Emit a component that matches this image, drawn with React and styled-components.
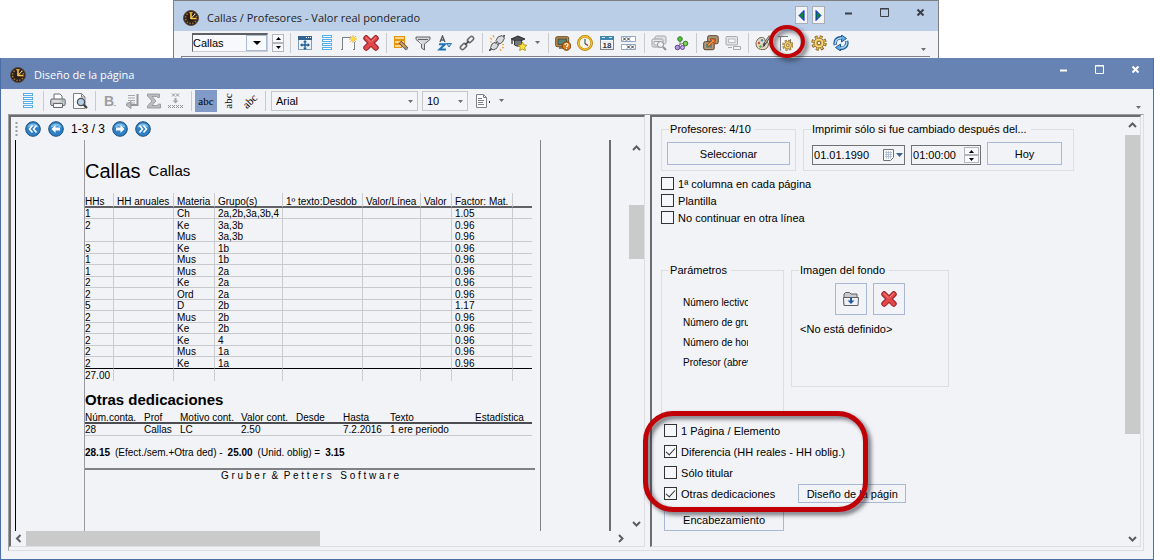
import React from 'react'
import styled, { createGlobalStyle, css } from 'styled-components'

const GlobalStyle = createGlobalStyle`
  * {
    box-sizing: border-box;
  }

  body {
    margin: 0;
    background: #fff;
    color: #000;
    font-family: 'Liberation Sans', Arial, sans-serif;
    font-size: 11px;
  }

  button,
  input,
  select {
    font: inherit;
    color: inherit;
  }
`

/* ---------- windows ---------- */

const Desktop = styled.div`
  display: flex;
  flex-direction: column;
  min-height: 100vh;
`

const BackWindow = styled.section`
  margin: 0 215px 0 173px;
  border: 1px solid #7f7f7f;
  border-bottom: 0;
  background: #f2f3f7;
`

const Dialog = styled.section`
  flex: 1;
  display: flex;
  flex-direction: column;
  border: 1px solid #4c6ea6;
  border-top: 0;
  background: #f2f3f7;
`

const TitleBar = styled.header`
  display: flex;
  align-items: flex-start;
  height: ${props => (props.$active ? 31 : 30)}px;
  padding: 0 8px 0 9px;
  background: ${props => (props.$active ? '#6683b3' : '#bacee8')};
  color: ${props => (props.$active ? '#fff' : '#1e1e1e')};
`

const WindowTitle = styled.h1`
  flex: 1;
  display: flex;
  align-items: center;
  gap: 8px;
  margin: 0;
  padding-top: 9px;
  font: 11px/16px 'Open Sans', 'Noto Sans', sans-serif;
`

const WindowButtons = styled.div`
  display: flex;
`

const WindowButton = styled.button`
  display: flex;
  align-items: center;
  justify-content: center;
  width: 36px;
  height: 23px;
  padding: 0;
  border: 0;
  background: none;

  &:last-child {
    margin-right: -8px;
  }
`

const StepButtons = styled.div`
  display: flex;
  gap: 4px;
  padding: 5px 5px 0 0;
`

const StepButton = styled.button`
  display: flex;
  align-items: center;
  justify-content: center;
  width: 13px;
  height: 18px;
  padding: 0;
  border: 1px solid #a9adb5;
  background: #f2f3f7;
`

/* ---------- toolbars ---------- */

const Toolbar = styled.div`
  display: flex;
  align-items: center;
  height: 25px;
  padding: 0 12px 2px ${props => props.$indent}px;
`

const ToolButton = styled.button`
  position: relative;
  display: flex;
  align-items: center;
  justify-content: center;
  width: ${props => (props.$narrow ? 14 : 22)}px;
  height: 22px;
  padding: 0;
  border: 0;
  background: ${props => (props.$pressed ? '#809bc8' : 'none')};
`

const Separator = styled.span`
  width: 1px;
  height: 20px;
  margin: 0 ${props => props.$after || 3}px 0 4px;
  background: #c9cacd;
`

const Overflow = styled.button`
  margin-left: auto;
  align-self: flex-end;
  height: 11px;
  padding: 0;
  border: 0;
  background: none;
  line-height: 0;
`

const Lettering = styled.span`
  font: 11px/12px 'Liberation Serif', serif;
  transform: rotate(${props => props.$angle || 0}deg);
`

const ContentEdge = styled.div`
  height: 2px;
  margin: 0 8px 0 7px;
  border-top: 1px solid #7f8186;
  border-left: 1px solid #7f8186;
`

const SelectBox = styled.span`
  position: relative;
  display: flex;
  width: ${props => props.$width}px;
  height: 20px;
  margin-right: 4px;

  select {
    flex: 1;
    padding: 0 16px 0 4px;
    border: 1px solid #c4c6ca;
    border-radius: 0;
    background: #f4f5f9;
    appearance: none;
  }

  svg {
    position: absolute;
    right: 5px;
    top: 9px;
    pointer-events: none;
  }
`

const SunkenSelect = styled(SelectBox)`
  height: 19px;

  select {
    padding-left: 0;
    border-color: #5e6066 #c9ccd2 #c9ccd2 #5e6066;
    border-width: 2px 1px 1px 1px;
    background: #f8f9fc;
  }
`

const DropMark = styled.span`
  position: absolute;
  right: 1px;
  top: 2px;
  display: flex;
  align-items: center;
  justify-content: center;
  width: 21px;
  height: 16px;
  border: 1px solid #a9bad3;
  background: #f8f9fc;
  pointer-events: none;

  svg {
    position: static;
  }
`

const SpinBox = styled.span`
  display: flex;
  flex-direction: column;
  width: ${props => props.$width}px;
  height: ${props => props.$height}px;
  margin-right: ${props => props.$gap || 0}px;

  button {
    flex: 1;
    display: flex;
    align-items: center;
    justify-content: center;
    padding: 0;
    border: 1px solid #b4b6ba;
    background: #f8f9fc;
  }
`

/* ---------- dialog body ---------- */

const Frame = styled.div`
  flex: 1;
  display: flex;
  gap: 5px;
  margin: 0 9px 8px 7px;
  padding: 0 2px 3px 0;
  border: 1px solid;
  border-color: #9b9da1 #dcdee2 #dcdee2 #9b9da1;
`

const pane = css`
  border-style: solid;
  border-color: #6b6d71 #dcdee2 #dcdee2 #6b6d71;
  border-width: 2px 1px 1px 2px;
`

const PreviewPane = styled.div`
  ${pane}
  flex: 637;
  min-width: 0;
  display: flex;
  flex-direction: column;
`

const SettingsPane = styled.div`
  ${pane}
  flex: 491;
  min-width: 0;
  display: flex;
`

const PageNav = styled.nav`
  display: flex;
  align-items: center;
  gap: 7px;
  height: 23px;
  padding: 1px 0 0 4px;
  font-size: 12px;

  button {
    padding: 0;
    border: 0;
    background: none;
    line-height: 0;
  }
`

const PreviewArea = styled.div`
  flex: 1;
  display: flex;
`

const Paper = styled.div`
  flex: 1;
  display: flex;
  margin: 0 18px 0 4px;
  padding: 0 68px;
  border-left: 1px solid #000;
  border-right: 2px solid #6b6d71;
`

const PrintArea = styled.article`
  flex: 1;
  min-width: 0;
  padding-right: 5px;
  border-left: 1px solid #9a9b9e;
  border-right: 1px solid #808286;
  font-size: 10px;
  line-height: 10px;
`

const PageHeading = styled.h2`
  display: flex;
  align-items: center;
  gap: 8px;
  margin: 0;
  padding: 19px 0 10px;
  font-size: 20px;
  font-weight: normal;
  line-height: 24px;

  small {
    font-size: 15px;
  }
`

const LessonTable = styled.table`
  border-collapse: separate;
  border-spacing: 0;
  table-layout: fixed;
  width: 447px;
  white-space: nowrap;

  th,
  td {
    height: 12px;
    padding: 0 0 0 3px;
    border-right: 1px solid #cbccd0;
    font-weight: normal;
    text-align: left;
    vertical-align: bottom;
  }

  th:first-child,
  td:first-child {
    padding-left: 0;
  }

  th:last-child,
  td:last-child {
    border-right: 0;
  }

  th {
    height: 15px;
    border-bottom: 2px solid #606266;
    line-height: 8px;
  }

  tbody td {
    border-bottom: 1px solid #c8c9cd;
    line-height: 8px;
  }

  tbody tr:nth-child(odd) td {
    height: 11px;
  }

  tbody tr:nth-child(2) td {
    padding-bottom: 1px;
    border-bottom: 0;
  }

  tbody tr:last-child td {
    border-bottom-color: #000;
  }
`

const SectionHeading = styled.h3`
  margin: 0;
  padding-top: 11px;
  font-size: 15px;
  line-height: 16px;
`

const ExtraTable = styled.table`
  border-collapse: separate;
  border-spacing: 0;
  table-layout: fixed;
  width: 447px;
  white-space: nowrap;

  th,
  td {
    height: 12px;
    padding: 0;
    border-bottom: 1px solid #c8c9cd;
    font-weight: normal;
    text-align: left;
  }

  th {
    height: 16px;
    border-bottom: 2px solid #4b4d50;
    line-height: 8px;
    vertical-align: bottom;
  }
`

const Summary = styled.p`
  display: flex;
  gap: 5px;
  margin: 0;
  padding: 12px 0 10px;
`

const PageFooter = styled.footer`
  border-top: 2px solid #808184;
  padding-top: 1px;
  text-align: center;
  white-space: pre;
`

const ScrollBar = styled.div`
  flex: none;
  display: flex;
  flex-direction: ${props => (props.$horizontal ? 'row' : 'column')};
  ${props => (props.$horizontal ? 'height' : 'width')}: 15px;
  padding-${props => (props.$horizontal ? 'right' : 'bottom')}: ${props => props.$end || 0}px;

  button {
    flex: none;
    display: flex;
    align-items: center;
    justify-content: center;
    width: 15px;
    height: 15px;
    padding: 0;
    border: 0;
    background: none;
  }
`

const Track = styled.div`
  flex: 1;
  display: flex;
  flex-direction: inherit;
`

const Thumb = styled.div`
  flex: 0 0 ${props => props.$length}%;
  margin-${props => (props.$horizontal ? 'left' : 'top')}: ${props => props.$start}px;
  background: #cacaca;
`

/* ---------- settings ---------- */

const Settings = styled.form`
  flex: 1;
  min-width: 0;
  padding: 5px 9px 0;
`

const GroupRow = styled.div`
  display: flex;
  align-items: flex-start;
  gap: 7px;
`

const Group = styled.fieldset`
  width: ${props => props.$width}px;
  height: ${props => props.$height}px;
  min-width: 0;
  margin: 0;
  padding: 0 ${props => props.$pad}px;
  border: 1px solid #dcdee2;

  legend {
    margin-left: ${props => 7 - props.$pad}px;
    padding: 0 4px 0 1px;
    line-height: 14px;
  }
`

const FieldRow = styled.div`
  display: flex;
  align-items: flex-end;
  gap: 6px;
  padding-top: 6px;
`

const PushButton = styled.button`
  width: ${props => props.$width}px;
  height: ${props => props.$height || 23}px;
  padding: 0;
  border: 1px solid #a9b9d4;
  background: #f2f3f7;
  line-height: 10px;
  white-space: nowrap;
  overflow: hidden;
`

const IconButton = styled(PushButton)`
  display: flex;
  align-items: center;
  justify-content: center;
`

const Field = styled.label`
  display: flex;
  align-items: center;
  width: ${props => props.$width}px;
  height: 20px;
  padding: 1px;
  border: 1px solid #6f7175;

  input {
    flex: 1;
    min-width: 0;
    padding: 0;
    border: 0;
    background: none;
    outline: none;
  }

  > button {
    padding: 0;
    border: 0;
    background: none;
    line-height: 0;
  }
`

const CheckLabel = styled.label`
  display: flex;
  align-items: center;
  gap: 4px;
  height: ${props => props.$height}px;
  white-space: nowrap;

  input {
    display: flex;
    align-items: center;
    justify-content: center;
    width: 13px;
    height: 13px;
    margin: 0;
    border: 1px solid #333;
    background: #f6f7fa;
    appearance: none;
  }

  input:checked::after {
    content: '';
    width: 4px;
    height: 8px;
    margin-top: -2px;
    border: solid #333;
    border-width: 0 1px 1px 0;
    transform: rotate(42deg);
  }
`

const CheckList = styled.div`
  padding: 4px 0 37px;
`

const ParameterList = styled.ul`
  width: 65px;
  margin: 16px 0 0 21px;
  padding: 0;
  overflow: hidden;
  list-style: none;
  font-size: 10px;
  line-height: 20px;
  white-space: nowrap;
`

const BackgroundButtons = styled.div`
  display: flex;
  justify-content: center;
  gap: 6px;
  padding: 6px 1px 8px 0;
`

const Highlighted = styled.div`
  position: relative;
  padding: 7px 3px 0;
`

const Options = styled.div`
  display: flex;
  flex-direction: column;
  padding-bottom: 4px;
`

const OptionRow = styled.div`
  display: flex;
  align-items: center;
  gap: 23px;
`

const ring = css`
  position: absolute;
  border-style: solid;
  border-color: #c00207;
  filter: drop-shadow(3px 3px 2px rgba(40, 40, 50, 0.65));
  pointer-events: none;
`

const OptionsRing = styled.span`
  ${ring}
  left: -18px;
  top: -2px;
  width: 225px;
  height: 101px;
  border-width: 5px;
  border-radius: 30px;
`

const ButtonRing = styled.span`
  ${ring}
  left: -5px;
  top: -7px;
  width: 36px;
  height: 33px;
  border-width: 4px;
  border-radius: 50%;
`

/* ---------- icons ---------- */

const Icon = ({ children, size = 16 }) => (
  <svg width={size} height={size} viewBox="0 0 16 16" fill="none" aria-hidden="true">
    {children}
  </svg>
)

const Arrow = ({ dir = 'down', w = 5, fill = '#6b6d71' }) => {
  const h = Math.ceil(w / 2)
  return (
    <svg width={w} height={h} viewBox={`0 0 ${w} ${h}`} aria-hidden="true">
      <path d={dir === 'down' ? `M0 0H${w}L${w / 2} ${h}Z` : `M0 ${h}H${w}L${w / 2} 0Z`} fill={fill} />
    </svg>
  )
}

const chevrons = {
  up: 'M1 7l3.5-3.5L8 7',
  down: 'M1 3l3.5 3.5L8 3',
  left: 'M6.5 1L3 4.5 6.5 8',
  right: 'M3 1l3.5 3.5L3 8',
}

const Chevron = ({ dir }) => (
  <svg width="9" height="9" viewBox="0 0 9 9" aria-hidden="true">
    <path d={chevrons[dir]} fill="none" stroke="#5c5e62" strokeWidth="2" />
  </svg>
)

const AppIcon = () => (
  <Icon>
    <circle cx="8" cy="8" r="7.5" fill="#2b2019" stroke="#544a44" />
    <circle cx="8" cy="8" r="5.5" stroke="#a9773c" strokeWidth="1.5" strokeDasharray="1.4 1.48" />
    <path d="M8 2v7M8 8.5h5" stroke="#ffc23c" strokeWidth="1.6" />
    <path d="M8 8.5L12 4" stroke="#f6e2b0" />
  </Icon>
)

const TableMoveIcon = () => (
  <Icon>
    <rect x="1.5" y="1.5" width="13" height="13" fill="#eef3fa" stroke="#7f9cb8" />
    <path d="M1 1h14v4H1z" fill="#33628e" />
    <path d="M9 2.500h1M11 2.500h1M13 2.500h1" stroke="#fff" />
    <path d="M8 6v8M4 10h8" stroke="#1d5b91" strokeWidth="1.3" />
    <path d="M8 5l2 2.300H6zM8 15l2-2.300H6zM3 10l2.300-2v4zM13 10l-2.300-2v4z" fill="#1d5b91" />
  </Icon>
)

const RowsIcon = () => (
  <Icon>
    {[0.5, 4.5, 8.5, 12.5].map(y => (
      <rect key={y} x="3.5" y={y} width="9" height="2" fill="#fff" stroke="#56aee8" />
    ))}
  </Icon>
)

const NewPageIcon = () => (
  <Icon>
    <path d="M2 3h8l3 4v8H2z" fill="#f7f8fb" />
    <path d="M1 2.500h8.500M1.500 2.500V15M13.500 7v8M0 14.500h2M12 14.500h2" stroke="#7e8084" />
    <path d="M12 0v8M8 4h8M9 1l6 6M15 1L9 7" stroke="#e9a93c" />
    <circle cx="12" cy="4" r="2" fill="#ffdf2e" />
  </Icon>
)

const CrossIcon = () => (
  <Icon>
    <path d="M3.200 3.200l9.600 9.600M12.800 3.200L3.200 12.800" stroke="#8e1b20" strokeWidth="5.8" strokeLinecap="round" />
    <path d="M3.200 3.200l9.600 9.600M12.800 3.200L3.200 12.800" stroke="#e2474a" strokeWidth="4" strokeLinecap="round" />
    <path d="M3 2.500l4.500 4.500M12.500 2.500L9 6" stroke="#f28e8c" strokeLinecap="round" />
  </Icon>
)

const EditRowsIcon = () => (
  <Icon>
    {[1, 5, 9].map(y => (
      <rect key={y} x="1.5" y={y + 0.5} width={y === 9 ? 7 : 10} height="3" fill="#ffd98a" stroke="#ea930f" />
    ))}
    <path d="M7 7l7 7" stroke="#54453a" strokeWidth="3.5" />
    <path d="M7.500 7.500l6 6" stroke="#d9a45c" strokeWidth="2" />
    <path d="M12 12l2.500 2.500" stroke="#8c8c8c" strokeWidth="2" />
  </Icon>
)

const FilterIcon = () => (
  <Icon>
    <path d="M1 2h14v2.500L9.500 9v6L6.500 13V9L1 4.500z" fill="#d6d7da" stroke="#626468" />
    <path d="M3 4.500h10" stroke="#626468" />
    <path d="M4 6l3 2.500" stroke="#fff" />
  </Icon>
)

const SortIcon = () => (
  <Icon>
    <path d="M3 7l2.500-6L8 7M4 5h3" stroke="#55575b" strokeWidth="1.3" />
    <path d="M2 9.200h6L2.500 14.500H9" stroke="#1f74b8" strokeWidth="2" />
    <path d="M9.500 8.500h5L12 12z" fill="#9cc5e6" stroke="#2b78b4" />
  </Icon>
)

const LinkIcon = () => (
  <Icon>
    <rect x="-3.5" y="-2" width="7" height="4" rx="2" transform="translate(4.5 11.5) rotate(-45)" stroke="#6b6d71" strokeWidth="1.6" />
    <rect x="-3.5" y="-2" width="7" height="4" rx="2" transform="translate(11.5 4.5) rotate(-45)" stroke="#6b6d71" strokeWidth="1.6" />
    <path d="M6 10l4-4" stroke="#45474b" strokeWidth="1.6" />
  </Icon>
)

const PlugIcon = () => (
  <Icon>
    <path d="M1 3l2 1.500M4 0l1 2.500M1 7h2M15 13l-2-1M12 16l-1-2M15 9.500h-2" stroke="#f2a03a" strokeWidth="1.2" />
    <path d="M0 16l3-3M13 3l3-3" stroke="#4c4e52" strokeWidth="1.8" />
    <path d="M3 9l3.500-2 3 3-2 3.500-3.500 1.500L1.500 12.500zM7 5.500L9 2l4-1.500L15.500 3 13.500 7 10.500 9z" fill="#d8dadd" stroke="#55575b" />
    <path d="M6.500 8.500L8.500 6.500M8.500 10l2-2" stroke="#45474b" />
  </Icon>
)

const GraduateIcon = () => (
  <Icon>
    <path d="M0 4l7-3 7 3-7 3z" fill="#4b4d52" stroke="#2f3135" />
    <path d="M3.500 6v4c2 1.500 5 1.500 7 0V6" fill="#74777c" stroke="#36383c" />
    <path d="M1 4.500V9" stroke="#36383c" strokeWidth="1.3" />
    <path d="M11.500 7l1.400 2.900 3.100.3-2.300 2.200.7 3.200-2.900-1.600-2.900 1.600.7-3.200L7 10.200l3.100-.3z" fill="#ffe23a" stroke="#a88a12" strokeWidth=".8" />
  </Icon>
)

const ScreenHelpIcon = () => (
  <Icon>
    <rect x=".7" y="1.7" width="13" height="10" rx="1.5" fill="#c08c4c" stroke="#6d4a20" />
    <rect x="3" y="4" width="8.5" height="5.5" fill="#5b8277" stroke="#34473f" strokeWidth=".8" />
    <path d="M4 13h5" stroke="#6d4a20" strokeWidth="1.4" />
    <circle cx="11.5" cy="11" r="4.3" fill="#d97a18" stroke="#7c430c" />
    <path d="M10 10c0-2 3-2 3 0 0 1-1.500 1-1.500 2.200M11.500 13v1" stroke="#fff" strokeWidth="1.1" />
  </Icon>
)

const ClockIcon = () => (
  <Icon>
    <circle cx="8" cy="8" r="6.7" fill="#f7f4e6" stroke="#b27d0a" strokeWidth="2.5" />
    <circle cx="8" cy="8" r="6.5" stroke="#f3c331" strokeWidth="1.3" />
    <path d="M8 4v4.500l3 2" stroke="#3f5f7a" strokeWidth="1.2" />
    <path d="M8 8.500l3 2.500" stroke="#c8382e" />
  </Icon>
)

const CalendarIcon = () => (
  <Icon>
    <rect x="1.5" y="1.5" width="13" height="13" fill="#fdfdfd" stroke="#7d8085" />
    <path d="M1 1h14v4H1z" fill="#3f87b0" />
    <path d="M3 2.500h3M10 2.500h3" stroke="#cfe6f2" />
    <path d="M2 7h12M2 13h12" stroke="#d6d8dc" />
    <text x="8" y="13" fontSize="8" fontWeight="bold" textAnchor="middle" fill="#2f3135">18</text>
  </Icon>
)

const PairsIcon = () => (
  <Icon>
    <path d="M.5 1.500h14v5H.5zM.5 9.500h14v5H.5z" fill="#fff" stroke="#90a6c4" />
    <path d="M2 2.500l3 3m0-3l-3 3M6 2.500l3 3m0-3l-3 3M6 10.500l3 3m0-3l-3 3M10 10.500l3 3m0-3l-3 3" stroke="#36383c" />
  </Icon>
)

const ScreenSearchIcon = () => (
  <Icon>
    <rect x="4" y="1" width="11" height="8" rx="1.5" fill="#dfe0e3" stroke="#a3a5a9" />
    <rect x="1" y="4" width="11" height="8" rx="1.5" fill="#e7e8eb" stroke="#9a9ca0" />
    <path d="M3 6.500h6v3.500H3z" fill="#f2f3f7" stroke="#a3a5a9" />
    <circle cx="9.5" cy="9.5" r="3" fill="#eef0f3" stroke="#8e9094" />
    <path d="M12 12l3 3" stroke="#8e9094" strokeWidth="2" />
  </Icon>
)

const NodesIcon = () => (
  <Icon>
    <path d="M7 4v6M7 9l6-1M7 9l-2 4" stroke="#7c7e82" />
    <circle cx="7" cy="4" r="2.3" fill="#59c043" stroke="#2e7d22" />
    <circle cx="12.5" cy="8.5" r="2.3" fill="#7ccf52" stroke="#2e7d22" />
    <circle cx="4.5" cy="12.5" r="2.3" fill="#b392dc" stroke="#5e3f93" />
    <circle cx="9.5" cy="12.5" r="2" fill="#c7b0e6" stroke="#5e3f93" />
  </Icon>
)

const ScreensSwapIcon = () => (
  <Icon>
    <rect x="4.7" y=".7" width="10.5" height="8" rx="1.5" fill="#b59a78" stroke="#53402b" />
    <rect x="7" y="2.7" width="6" height="4" fill="#61877a" />
    <rect x=".7" y="6.7" width="10.5" height="8" rx="1.5" fill="#b59a78" stroke="#53402b" />
    <rect x="3" y="8.7" width="6" height="4" fill="#61877a" />
    <path d="M4.500 11L10 6" stroke="#b4461c" strokeWidth="2.8" />
    <path d="M7 4h5v5z" fill="#f08a2c" stroke="#b4461c" />
    <path d="M5 10.500l5-4.500" stroke="#f5a24a" strokeWidth="1.2" />
  </Icon>
)

const ScreenGrayIcon = () => (
  <Icon>
    <rect x="1" y="1.5" width="11.5" height="8.5" rx="1" fill="#e2e3e6" stroke="#a7a9ad" />
    <path d="M3.500 4h6.500v3.500H3.500z" fill="#f6f7fa" stroke="#b9bbbf" />
    <path d="M3 12.500h4" stroke="#a7a9ad" />
    <path d="M8.500 11.500h7v3h-7z" fill="#f2f3f7" stroke="#a7a9ad" />
  </Icon>
)

const PaletteIcon = () => (
  <Icon>
    <path d="M1 9c0-4 3-7 6.500-6.500C11 3 9 6 11 6.500c3 .5 3 4 1 6.500-3 3-11 2-11-4z" fill="#e3d8c4" stroke="#77664b" />
    <circle cx="4" cy="8" r="1.2" fill="#d44d3c" />
    <circle cx="7" cy="5.300" r="1.2" fill="#3c8fd0" />
    <circle cx="5.5" cy="11.5" r="1.2" fill="#4bab47" />
    <path d="M15 1L8.500 10.500" stroke="#4a4c50" strokeWidth="2.4" />
    <path d="M14.500 1.500L10 8" stroke="#e5c68c" />
    <path d="M9 9.500l-2 3.500 3-2.500z" fill="#333" />
  </Icon>
)

const Gear = () => (
  <>
    <circle cx="8" cy="8" r="6.3" stroke="#80601c" strokeWidth="2.8" strokeDasharray="2.9 2.04" />
    <circle cx="8" cy="8" r="5" fill="#e7bb54" stroke="#80601c" />
    <circle cx="8" cy="8" r="5.8" stroke="#e7bb54" strokeWidth="2" strokeDasharray="1.8 2.755" strokeDashoffset="-.5" />
    <circle cx="8" cy="8" r="3.8" stroke="#f8df94" />
    <circle cx="8" cy="8" r="1.8" fill="#f2f3f7" stroke="#80601c" />
  </>
)

const GearIcon = () => (
  <Icon>
    <Gear />
  </Icon>
)

const PageGearIcon = () => (
  <Icon>
    <path d="M3.500 1.500H11l2.500 2.500v8h-10z" fill="#fbfbfd" />
    <path d="M3.500 15.500v-14H11M1 1.500h2M13.500 4v5" stroke="#7e8084" />
    <g transform="translate(5 4.500) scale(.72)">
      <Gear />
    </g>
  </Icon>
)

const RefreshIcon = () => (
  <Icon>
    <path d="M2.500 10C1 5 5 2 9 3" stroke="#1d5a94" strokeWidth="3.6" />
    <path d="M8.500 0l5 3.500-5 3.500z" fill="#5fa8e2" stroke="#1d5a94" />
    <path d="M13.500 6C15 11 11 14 7 13" stroke="#1d5a94" strokeWidth="3.6" />
    <path d="M7.500 16l-5-3.500 5-3.500z" fill="#5fa8e2" stroke="#1d5a94" />
    <path d="M2.500 9.500C1.500 5.500 5 2.500 9 3M13.500 6.500c1 4-2.500 7-6.500 6.500" stroke="#a4d2f4" strokeWidth="1.6" />
  </Icon>
)

const PrinterIcon = () => (
  <Icon>
    <path d="M4 6V1h6l2 2v3" fill="#fff" stroke="#6c6e72" />
    <rect x=".7" y="6" width="14.5" height="6.5" rx="1.2" fill="#c9cbcf" stroke="#66686c" />
    <path d="M3.500 10.500h9v4h-9z" fill="#f6f7fa" stroke="#66686c" />
    <path d="M2.500 8h7" stroke="#efeff2" />
    <path d="M12 8h1.500" stroke="#5a9f4a" />
  </Icon>
)

const PrintPreviewIcon = () => (
  <Icon>
    <path d="M1.500.5h8l3.500 3.500v11.500H1.500z" fill="#fdfdfe" stroke="#7e8084" />
    <path d="M9.500.5V4H13" stroke="#7e8084" />
    <circle cx="9" cy="9" r="3.6" fill="#b5d0e6" stroke="#4c5056" strokeWidth="1.3" />
    <path d="M11.700 11.700L15 15" stroke="#3d4044" strokeWidth="2.2" />
  </Icon>
)

const BoldIcon = () => (
  <Icon>
    <text x="2" y="13" fontSize="14" fontWeight="bold" fill="#9b9da1">B</text>
    <path d="M11.500 12.500h2.500" stroke="#b4b6ba" />
  </Icon>
)

const WrapIcon = () => (
  <Icon>
    <path d="M4 2.500h7M4 5h7M4 7.500h7M2 10h9" stroke="#a5a7ab" />
    <path d="M13.500 1v11H6" stroke="#95979b" strokeWidth="2" />
    <path d="M2 12l5-3.500v7z" fill="#b8babe" stroke="#95979b" />
  </Icon>
)

const SumIcon = () => (
  <Icon>
    <path d="M1.500 1h12v3.500h-2L11 3.500H6L10 8l-4 4.500h5.500l1-1.500h2V15h-13v-2L6 8 1.500 3z" fill="#babcc0" stroke="#8f9195" strokeWidth=".8" />
  </Icon>
)

const InsertRowsIcon = () => (
  <Icon>
    <path d="M4 .5l3 3m0-3l-3 3M8 .5l3 3m0-3l-3 3" stroke="#8f9195" />
    <path d="M7.500 5v3" stroke="#a5a7ab" strokeWidth="2" />
    <path d="M4.500 7.500h6l-3 3z" fill="#a5a7ab" />
    <path d="M0 12l3 3m0-3l-3 3M4 12l3 3m0-3l-3 3M8 12l3 3m0-3l-3 3M12 12l3 3m0-3l-3 3" stroke="#8f9195" />
  </Icon>
)

const DocumentIcon = () => (
  <Icon>
    <path d="M1.500 1.500h7l3 3v10h-10z" fill="#fafbfd" stroke="#7e8084" />
    <path d="M8.500 1.500v3h3M3 5.500h4M3 7.500h6M3 9.500h5M3 11.500h6" stroke="#7e8084" />
    <path d="M14.500 8v2" stroke="#333" />
  </Icon>
)

const FolderIcon = () => (
  <Icon>
    <path d="M1 13.500V3l1.500-1.500h4L8 3h6v3" fill="#c7cacf" stroke="#5d6066" />
    <path d="M1 14.500l-.5-8h15l-.5 8z" fill="#eff2f6" stroke="#5d6066" />
    <path d="M8 7v3.500" stroke="#245a9c" strokeWidth="2" />
    <path d="M4.500 9.500h7L8 13z" fill="#245a9c" />
  </Icon>
)

const CalendarFieldIcon = () => (
  <svg width="20" height="12" viewBox="0 0 20 12" fill="none" aria-hidden="true">
    <path d="M.5.5h10v8l-3 3h-7z" fill="#fafbfd" stroke="#6f7175" />
    <path d="M2 3.500h7M2 5.500h7M2 7.500h7M3.500 2v8M5.500 2v8M7.500 2v8" stroke="#a9b7cc" strokeWidth=".8" />
    <path d="M13 4h7l-3.500 4z" fill="#3f5f8c" />
  </svg>
)

const NavIcon = ({ back, double }) => (
  <Icon>
    <circle cx="8" cy="8" r="7.3" fill="#2f80c4" stroke="#1c4f80" />
    <path d="M2.500 6.500C3.500 1 12.500 1 13.500 6.500c-3-1.500-8-1.500-11 0z" fill="#7dbce9" />
    <g transform={back ? undefined : 'translate(16 0) scale(-1 1)'}>
      {double ? (
        <path d="M7.500 4.500L4.500 8l3 3.500M11.500 4.500L8.500 8l3 3.500" stroke="#fff" strokeWidth="1.6" />
      ) : (
        <path d="M7.500 4v2.500H12v3H7.500V12l-4-4z" fill="#fff" />
      )}
    </g>
  </Icon>
)

const Grip = () => (
  <svg width="3" height="15" viewBox="0 0 3 15" aria-hidden="true">
    <path d="M1.500 0v15" stroke="#9a9ca0" strokeWidth="2" strokeDasharray="2 2" />
  </svg>
)

const controlShapes = {
  Minimizar: 'M2 6.500h7',
  Maximizar: 'M1.500 1.500h8v8h-8zM1 2h9',
  Cerrar: 'M2.500 2.500l6 6M8.500 2.500l-6 6',
}

const WindowControls = ({ color }) => (
  <WindowButtons>
    {Object.entries(controlShapes).map(([label, d]) => (
      <WindowButton key={label} type="button" aria-label={label}>
        <svg width="11" height="11" viewBox="0 0 11 11" aria-hidden="true">
          <path d={d} fill="none" stroke={color} strokeWidth={label === 'Maximizar' ? 1 : 2} />
        </svg>
      </WindowButton>
    ))}
  </WindowButtons>
)

/* ---------- data ---------- */

const mainTools = [
  [
    ['Vista', TableMoveIcon],
    ['Filas', RowsIcon],
    ['Nuevo', NewPageIcon],
    ['Borrar', CrossIcon],
  ],
  [
    ['Editar filas', EditRowsIcon],
    ['Filtro', FilterIcon],
    ['Ordenar', SortIcon],
    ['Enlazar', LinkIcon],
  ],
  [
    ['Conectar', PlugIcon],
    ['Calificación', GraduateIcon],
    ['Más', null],
  ],
  [
    ['Ayuda', ScreenHelpIcon],
    ['Horario', ClockIcon],
    ['Calendario', CalendarIcon],
    ['Parejas', PairsIcon],
  ],
  [
    ['Buscar', ScreenSearchIcon],
    ['Relaciones', NodesIcon],
  ],
  [
    ['Cambiar', ScreensSwapIcon],
    ['Pantalla', ScreenGrayIcon],
  ],
  [
    ['Colores', PaletteIcon],
    ['Diseño de la página', PageGearIcon, true],
  ],
]

const lessonColumns = [
  ['HHs', 29],
  ['HH anuales', 60],
  ['Materia', 41],
  ['Grupo(s)', 68],
  ['1º texto:Desdob', 80],
  ['Valor/Línea', 58],
  ['Valor', 31],
  ['Factor: Mat.', 61],
  ['', 19],
]

const lessons = [
  ['1', 'Ch', '2a,2b,3a,3b,4', '1.05'],
  ['2', 'Ke', '3a,3b', '0.96'],
  ['', 'Mus', '3a,3b', '0.96'],
  ['3', 'Ke', '1b', '0.96'],
  ['1', 'Mus', '1b', '0.96'],
  ['1', 'Mus', '2a', '0.96'],
  ['2', 'Ke', '2a', '0.96'],
  ['2', 'Ord', '2a', '0.96'],
  ['5', 'D', '2b', '1.17'],
  ['2', 'Mus', '2b', '0.96'],
  ['2', 'Ke', '2b', '0.96'],
  ['2', 'Ke', '4', '0.96'],
  ['2', 'Mus', '1a', '0.96'],
  ['2', 'Ke', '1a', '0.96'],
]

const extraColumns = [
  ['Núm.conta.', 59, '28'],
  ['Prof', 36, 'Callas'],
  ['Motivo cont.', 61, 'LC'],
  ['Valor cont.', 55, '2.50'],
  ['Desde', 47, ''],
  ['Hasta', 47, '7.2.2016'],
  ['Texto', 85, '1 ere periodo'],
  ['Estadística', 57, ''],
]

const parameters = ['Número lectivo', 'Número de grupo', 'Número de horas', 'Profesor (abrev.)']

/* ---------- parts ---------- */

const Spinner = ({ width, height, gap }) => (
  <SpinBox $width={width} $height={height} $gap={gap}>
    <button type="button" aria-label="Subir">
      <Arrow dir="up" fill="#000" />
    </button>
    <button type="button" aria-label="Bajar">
      <Arrow fill="#000" />
    </button>
  </SpinBox>
)

const Tool = ({ label, icon: Picture, marked }) => (
  <ToolButton type="button" aria-label={label} $narrow={!Picture}>
    {Picture ? <Picture /> : <Arrow />}
    {marked && <ButtonRing />}
  </ToolButton>
)

const Check = ({ label, checked, height }) => (
  <CheckLabel $height={height}>
    <input type="checkbox" defaultChecked={checked} />
    {label}
  </CheckLabel>
)

const Scroll = ({ horizontal, start, length, end }) => (
  <ScrollBar $horizontal={horizontal} $end={end}>
    <button type="button" aria-label="Atrás">
      <Chevron dir={horizontal ? 'left' : 'up'} />
    </button>
    <Track>
      <Thumb $horizontal={horizontal} $start={start} $length={length} />
    </Track>
    <button type="button" aria-label="Adelante">
      <Chevron dir={horizontal ? 'right' : 'down'} />
    </button>
  </ScrollBar>
)

const MainWindow = () => (
  <BackWindow>
    <TitleBar>
      <WindowTitle>
        <AppIcon />
        Callas / Profesores - Valor real ponderado
      </WindowTitle>
      <StepButtons>
        <StepButton type="button" aria-label="Anterior">
          <svg width="7" height="11" viewBox="0 0 7 11" aria-hidden="true">
            <path d="M6 .5v10L1 5.500z" fill="#0a8a2a" stroke="#0a1ee0" />
          </svg>
        </StepButton>
        <StepButton type="button" aria-label="Siguiente">
          <svg width="7" height="11" viewBox="0 0 7 11" aria-hidden="true">
            <path d="M1 .5v10l5-5z" fill="#0a8a2a" stroke="#0a1ee0" />
          </svg>
        </StepButton>
      </StepButtons>
      <WindowControls color="#3b3f46" />
    </TitleBar>
    <Toolbar $indent={18}>
      <SunkenSelect $width={76}>
        <select aria-label="Profesor" defaultValue="Callas">
          <option>Callas</option>
        </select>
        <DropMark>
          <Arrow w={8} fill="#000" />
        </DropMark>
      </SunkenSelect>
      <Spinner width={12} height={18} gap={2} />
      {mainTools.map((group, index) => (
        <React.Fragment key={index}>
          <Separator />
          {group.map(([label, icon, marked]) => (
            <Tool key={label} label={label} icon={icon} marked={marked} />
          ))}
        </React.Fragment>
      ))}
      <Separator $after={7} />
      <Tool label="Ajustes" icon={GearIcon} />
      <Tool label="Actualizar" icon={RefreshIcon} />
      <Overflow type="button" aria-label="Más herramientas">
        <Arrow />
      </Overflow>
    </Toolbar>
    <ContentEdge />
  </BackWindow>
)

const FormatToolbar = () => (
  <Toolbar $indent={16}>
    <Tool label="Filas" icon={RowsIcon} />
    <Separator />
    <Tool label="Imprimir" icon={PrinterIcon} />
    <Tool label="Vista previa" icon={PrintPreviewIcon} />
    <Separator />
    <Tool label="Negrita" icon={BoldIcon} />
    <Tool label="Salto de línea" icon={WrapIcon} />
    <Tool label="Suma" icon={SumIcon} />
    <Tool label="Insertar" icon={InsertRowsIcon} />
    <Separator />
    <ToolButton type="button" $pressed>
      <Lettering>abc</Lettering>
    </ToolButton>
    <ToolButton type="button">
      <Lettering $angle={-90}>abc</Lettering>
    </ToolButton>
    <ToolButton type="button">
      <Lettering $angle={-45}>abc</Lettering>
    </ToolButton>
    <Separator $after={5} />
    <SelectBox $width={147}>
      <select aria-label="Fuente" defaultValue="Arial">
        <option>Arial</option>
      </select>
      <Arrow />
    </SelectBox>
    <SelectBox $width={46}>
      <select aria-label="Tamaño" defaultValue="10">
        <option>10</option>
      </select>
      <Arrow />
    </SelectBox>
    <Tool label="Página" icon={DocumentIcon} />
    <Tool label="Más opciones" />
    <Overflow type="button" aria-label="Más herramientas">
      <Arrow />
    </Overflow>
  </Toolbar>
)

const Lessons = () => (
  <LessonTable>
    <colgroup>
      {lessonColumns.map(([name, width]) => (
        <col key={name} style={{ width }} />
      ))}
    </colgroup>
    <thead>
      <tr>
        {lessonColumns.map(([name]) => (
          <th key={name}>{name}</th>
        ))}
      </tr>
    </thead>
    <tbody>
      {lessons.map(([hours, subject, groups, factor], index) => (
        <tr key={index}>
          <td>{hours}</td>
          <td />
          <td>{subject}</td>
          <td>{groups}</td>
          <td />
          <td />
          <td />
          <td>{factor}</td>
          <td />
        </tr>
      ))}
    </tbody>
    <tfoot>
      <tr>
        <td>27.00</td>
        {lessonColumns.slice(1).map(([name]) => (
          <td key={name} />
        ))}
      </tr>
    </tfoot>
  </LessonTable>
)

const Extras = () => (
  <ExtraTable>
    <colgroup>
      {extraColumns.map(([name, width]) => (
        <col key={name} style={{ width }} />
      ))}
    </colgroup>
    <thead>
      <tr>
        {extraColumns.map(([name]) => (
          <th key={name}>{name}</th>
        ))}
      </tr>
    </thead>
    <tbody>
      <tr>
        {extraColumns.map(([name, , value]) => (
          <td key={name}>{value}</td>
        ))}
      </tr>
    </tbody>
  </ExtraTable>
)

const Preview = () => (
  <PreviewPane>
    <PageNav>
      <Grip />
      <button type="button" aria-label="Primera página">
        <NavIcon back double />
      </button>
      <button type="button" aria-label="Página anterior">
        <NavIcon back />
      </button>
      <span>1-3 / 3</span>
      <button type="button" aria-label="Página siguiente">
        <NavIcon />
      </button>
      <button type="button" aria-label="Última página">
        <NavIcon double />
      </button>
    </PageNav>
    <PreviewArea>
      <Paper>
        <PrintArea>
          <PageHeading>
            Callas <small>Callas</small>
          </PageHeading>
          <Lessons />
          <SectionHeading>Otras dedicaciones</SectionHeading>
          <Extras />
          <Summary>
            <b>28.15</b>
            <span>(Efect./sem.+Otra ded) -</span>
            <b>25.00</b>
            <span>(Unid. oblig) =</span>
            <b>3.15</b>
          </Summary>
          <PageFooter>{'G r u b e r  &  P e t t e r s   S o f t w a r e'}</PageFooter>
        </PrintArea>
      </Paper>
      <Scroll start={50} length={15} />
    </PreviewArea>
    <Scroll horizontal start={0} length={50} end={16} />
  </PreviewPane>
)

const PageSettings = () => (
  <SettingsPane>
    <Settings>
      <GroupRow>
        <Group $width={135} $height={49} $pad={5}>
          <legend>Profesores: 4/10</legend>
          <FieldRow>
            <PushButton type="button" $width={124}>
              Seleccionar
            </PushButton>
          </FieldRow>
        </Group>
        <Group $width={271} $height={49} $pad={8}>
          <legend>Imprimir sólo si fue cambiado después del...</legend>
          <FieldRow>
            <Field $width={93}>
              <input aria-label="Fecha" defaultValue="01.01.1990" />
              <button type="button" aria-label="Elegir fecha">
                <CalendarFieldIcon />
              </button>
            </Field>
            <Field $width={70}>
              <input aria-label="Hora" defaultValue="01:00:00" />
              <Spinner width={15} height={16} />
            </Field>
            <PushButton type="button" $width={75}>
              Hoy
            </PushButton>
          </FieldRow>
        </Group>
      </GroupRow>
      <CheckList>
        <Check label="1ª columna en cada página" height={17} />
        <Check label="Plantilla" height={17} />
        <Check label="No continuar en otra línea" height={17} />
      </CheckList>
      <GroupRow>
        <Group $width={123} $height={150} $pad={0}>
          <legend>Parámetros</legend>
          <ParameterList>
            {parameters.map(name => (
              <li key={name}>{name}</li>
            ))}
          </ParameterList>
        </Group>
        <Group $width={158} $height={124} $pad={8}>
          <legend>Imagen del fondo</legend>
          <BackgroundButtons>
            <IconButton type="button" aria-label="Abrir imagen" $width={32} $height={32}>
              <FolderIcon />
            </IconButton>
            <IconButton type="button" aria-label="Quitar imagen" $width={32} $height={32}>
              <CrossIcon />
            </IconButton>
          </BackgroundButtons>
          <span>&lt;No está definido&gt;</span>
        </Group>
      </GroupRow>
      <Highlighted>
        <Options>
          <Check label="1 Página / Elemento" height={21} />
          <Check label="Diferencia (HH reales - HH oblig.)" checked height={21} />
          <Check label="Sólo titular" height={21} />
          <OptionRow>
            <Check label="Otras dedicaciones" checked height={21} />
            <PushButton type="button" $width={108} $height={19}>
              Diseño de la págin
            </PushButton>
          </OptionRow>
        </Options>
        <PushButton type="button" $width={120}>
          Encabezamiento
        </PushButton>
        <OptionsRing />
      </Highlighted>
    </Settings>
    <Scroll start={3} length={75} />
  </SettingsPane>
)

const App = () => (
  <>
    <GlobalStyle />
    <Desktop>
      <MainWindow />
      <Dialog role="dialog" aria-label="Diseño de la página">
        <TitleBar $active>
          <WindowTitle as="h2">
            <AppIcon />
            Diseño de la página
          </WindowTitle>
          <WindowControls color="#fff" />
        </TitleBar>
        <FormatToolbar />
        <Frame>
          <Preview />
          <PageSettings />
        </Frame>
      </Dialog>
    </Desktop>
  </>
)

export default App
